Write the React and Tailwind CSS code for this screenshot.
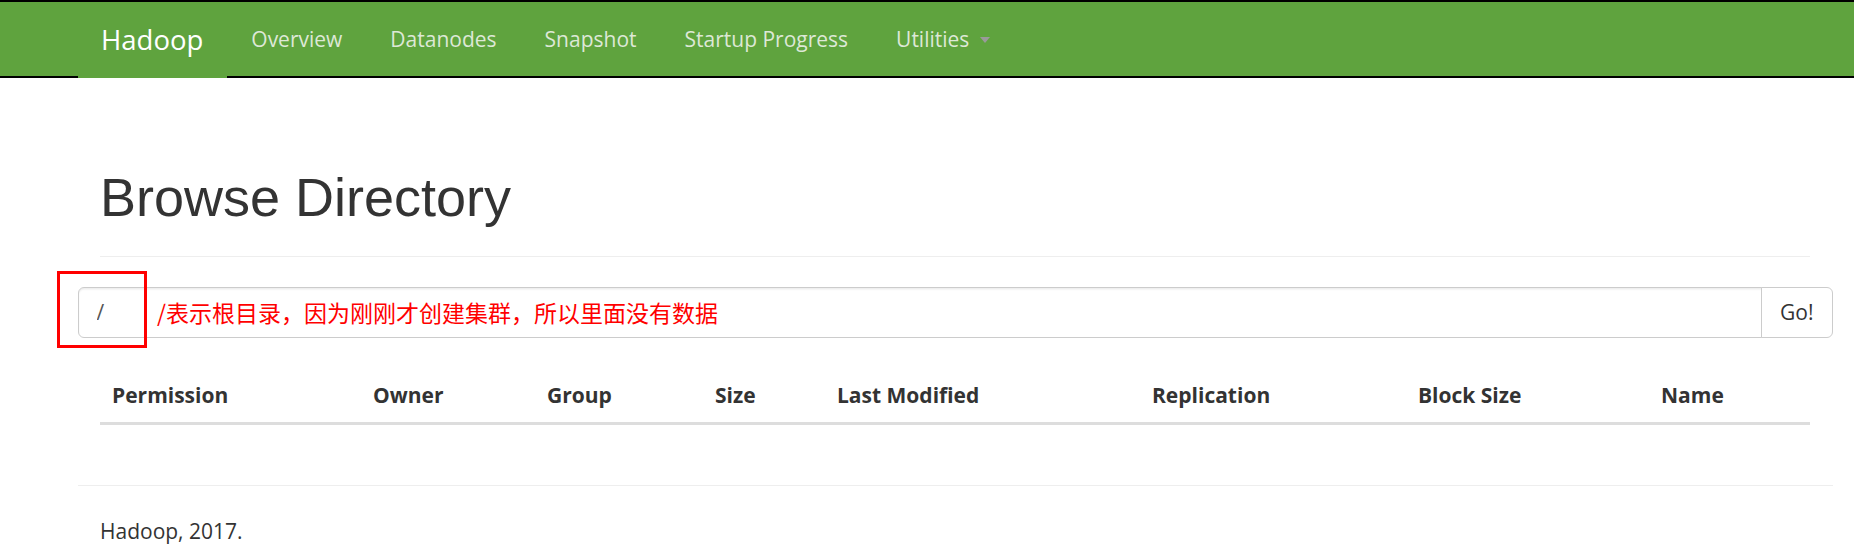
import React from "react";

const navLinks = ["Overview", "Datanodes", "Snapshot", "Startup Progress"];

const columns = [
  { label: "Permission", width: "w-[261px]" },
  { label: "Owner", width: "w-[174px]" },
  { label: "Group", width: "w-[168px]" },
  { label: "Size", width: "w-[122px]" },
  { label: "Last Modified", width: "w-[315px]" },
  { label: "Replication", width: "w-[266px]" },
  { label: "Block Size", width: "w-[243px]" },
  { label: "Name", width: "w-[161px]" },
];

const Navbar = () => (
  <nav className="h-[78px] border-y-2 border-black bg-[#5fa33e]">
    <div className="ml-[77.5px] flex h-full items-start">
      <a
        href="#"
        className="flex h-[calc(100%+2px)] items-center bg-[#5fa33e] pl-[23.5px] pr-[24px] text-[27.5px] leading-[30px] text-white"
      >
        Hadoop
      </a>
      <ul className="flex h-full">
        {navLinks.map((link) => (
          <li key={link} className="flex items-center">
            <a href="#" className="px-[24px] text-[21px] leading-[30px] text-[#dde8d6]">
              {link}
            </a>
          </li>
        ))}
        <li className="flex items-center">
          <a href="#" className="flex items-center px-[24px] text-[21px] leading-[30px] text-[#dde8d6]">
            Utilities
            <span className="ml-[11px] mt-[2px] inline-block h-0 w-0 border-x-[5px] border-t-[6px] border-x-transparent border-t-[#9a9a9a]" />
          </a>
        </li>
      </ul>
    </div>
  </nav>
);

export default function App() {
  return (
    <div className="min-h-[556px] bg-white font-['Open_Sans',sans-serif] text-[#333]">
      <Navbar />

      <div className="ml-[77.5px] w-[1755px] pt-[90px]">
        <div className="mx-[22.5px] mb-[30px] border-b-[1.5px] border-[#eee] pb-[13.5px]">
          <h1 className="mb-[15px] font-['Liberation_Sans',Arial,sans-serif] text-[54px] font-normal leading-[1.1] text-[#333]">
            Browse Directory
          </h1>
        </div>

        <form className="relative flex h-[51px]" onSubmit={(e) => e.preventDefault()}>
          <input
            type="text"
            defaultValue="/"
            className="h-full flex-1 rounded-l-[6px] border-[1.5px] border-[#ccc] px-[18px] text-[21px] text-[#555] shadow-[inset_0_1.5px_1.5px_rgba(0,0,0,0.075)] outline-none"
          />
          <button
            type="submit"
            className="-ml-[1.5px] h-full rounded-r-[6px] border-[1.5px] border-[#ccc] bg-white px-[18px] text-[21px] text-[#333]"
          >
            Go!
          </button>

          {/* red annotation drawn over the screenshot */}
          <div className="pointer-events-none absolute -left-[20.5px] -top-[15.5px] h-[77px] w-[90px] border-[3px] border-[#f00]" />
          <div className="pointer-events-none absolute inset-y-0 left-[79.5px] flex items-center font-['Noto_Sans_CJK_SC',sans-serif] text-[23px] text-[#f00]">
            /表示根目录，因为刚刚才创建集群，所以里面没有数据
          </div>
        </form>

        <div className="mx-[22.5px] mt-[30px] pb-[30px]">
          <table className="w-full table-fixed border-collapse">
            <thead>
              <tr>
                {columns.map((col) => (
                  <th
                    key={col.label}
                    className={`${col.width} border-b-[3px] border-[#ddd] px-[12px] py-[12px] text-left text-[21px] font-bold leading-[30px] text-[#333]`}
                  >
                    {col.label}
                  </th>
                ))}
              </tr>
            </thead>
            <tbody></tbody>
          </table>
        </div>

        <hr className="my-[30px] border-t-[1.5px] border-[#eee]" />
        <p className="px-[22.5px] text-[21px] leading-[30px] text-[#333]">Hadoop, 2017.</p>
      </div>
    </div>
  );
}
